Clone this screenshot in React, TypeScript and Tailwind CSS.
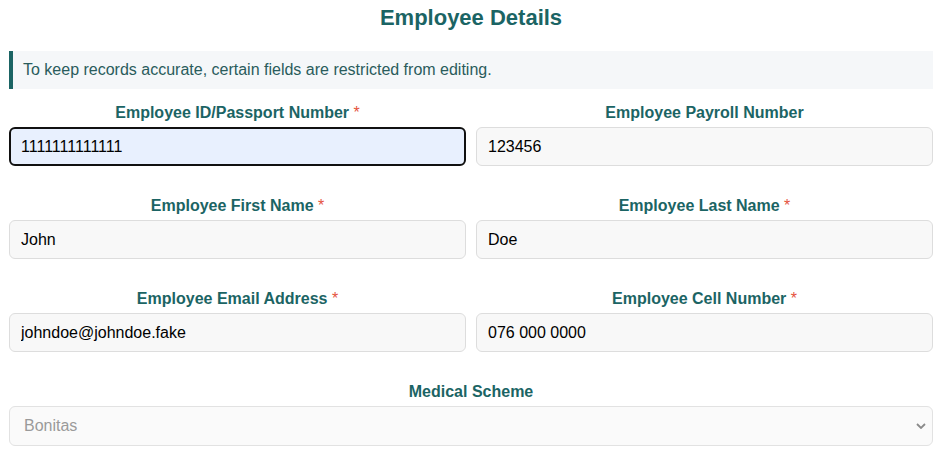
import React from "react";

const Label = ({ text, required }: { text: string; required?: boolean }) => (
  <div className="mb-[5px] text-center text-[16px] font-bold leading-[18px] text-[#1b6464]">
    {text}
    {required && <span className="text-[#e5533d] font-normal"> *</span>}
  </div>
);

const Field = ({
  label,
  value,
  required,
  focused,
}: {
  label: string;
  value: string;
  required?: boolean;
  focused?: boolean;
}) => (
  <div className="flex flex-col">
    <Label text={label} required={required} />
    <input
      readOnly
      value={value}
      className={
        focused
          ? "h-[39px] w-full rounded-[6px] border-2 border-[#111111] bg-[#e8f0fe] px-[10px] text-[16px] text-black outline-none"
          : "h-[39px] w-full rounded-[6px] border border-[#dddddd] bg-[#f8f8f8] px-[11px] text-[16px] text-black outline-none"
      }
    />
  </div>
);

export default function App() {
  return (
    <div
      className="min-h-[463px] w-full bg-white pl-[9px] pr-[11px] pt-[5px]"
      style={{ fontFamily: '"Liberation Sans", Arial, sans-serif' }}
    >
      <h2 className="text-center text-[22px] font-bold leading-[26px] text-[#1b6464]">
        Employee Details
      </h2>
      <div className="mt-[20px] border-l-4 border-[#1b6464] bg-[#f5f7f9] py-[10px] pl-[10px] text-[16px] leading-[18px] text-[#2a5c5c]">
        To keep records accurate, certain fields are restricted from editing.
      </div>
      <div className="mt-[15px] grid grid-cols-2 gap-x-[10px] gap-y-[31px]">
        <Field label="Employee ID/Passport Number" value="1111111111111" required focused />
        <Field label="Employee Payroll Number" value="123456" />
        <Field label="Employee First Name" value="John" required />
        <Field label="Employee Last Name" value="Doe" required />
        <Field label="Employee Email Address" value="johndoe@johndoe.fake" required />
        <Field label="Employee Cell Number" value="076 000 0000" required />
        <div className="col-span-2 flex flex-col">
          <Label text="Medical Scheme" />
          <div className="relative flex h-[40px] w-full items-center rounded-[6px] border border-[#e2e2e2] bg-[#fafafa] pl-[14px] text-[16px] text-[#9a9a9a]">
            Bonitas
            <svg
              className="absolute right-[6px] top-1/2 -translate-y-1/2"
              width="10"
              height="6"
              viewBox="0 0 10 6"
              fill="none"
            >
              <path d="M1 1l4 4 4-4" stroke="#8a8a8a" strokeWidth="1.8" />
            </svg>
          </div>
        </div>
      </div>
    </div>
  );
}
